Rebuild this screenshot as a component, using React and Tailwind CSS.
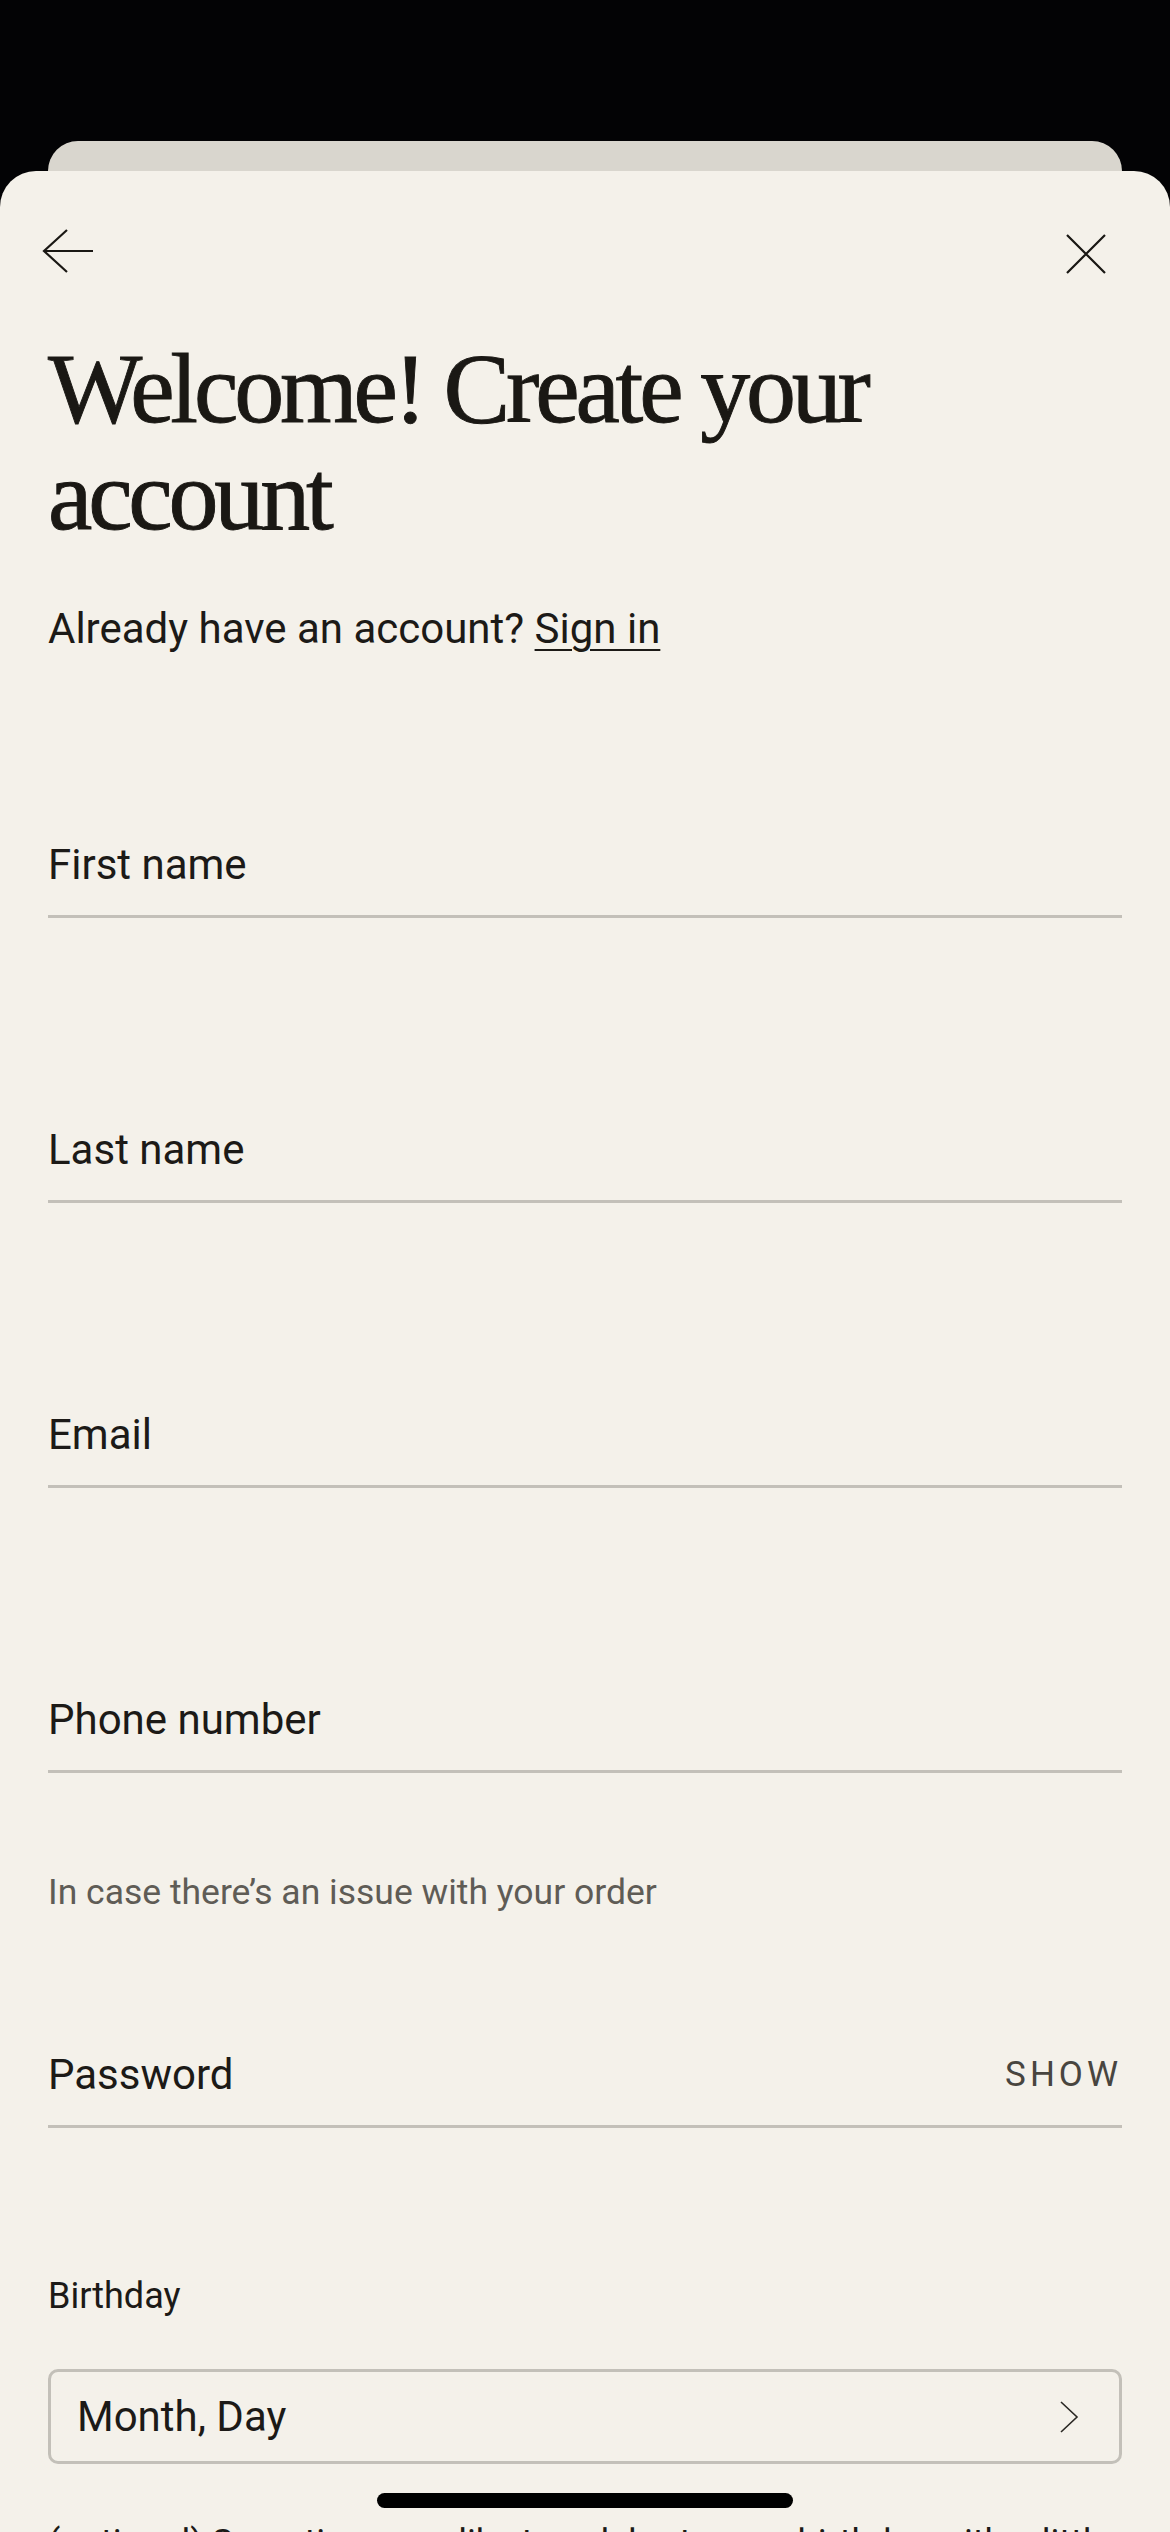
import React from "react";

const sans = "font-['Roboto',sans-serif]";

const Field = ({ label, right, className = "" }) => (
  <div className={`flex items-center justify-between border-b-[3px] border-[#c3c0b9] pb-[25px] ${className}`}>
    <span className="text-[42px] leading-[50px] text-[#1c1a17]">{label}</span>
    {right}
  </div>
);

const App = () => {
  return (
    <div className={`relative h-[2532px] overflow-hidden bg-[#030305] pt-[141px] ${sans}`}>
      {/* card peeking behind the sheet */}
      <div className="mx-12 h-[30px] rounded-t-[30px] bg-[#d9d6ce]" />

      {/* sheet */}
      <div className="min-h-[2361px] rounded-t-[36px] bg-[#f4f1ea] pt-[40px]">
        <div className="flex h-[80px] items-center justify-between pl-[42px] pr-[64px]">
          <svg width="52" height="44" viewBox="0 0 52 44" fill="none" stroke="#1a1814" strokeWidth="2.2">
            <path d="M2 22H51" />
            <path d="M25 1L2 22L25 43" />
          </svg>
          <svg className="mt-[6px]" width="40" height="40" viewBox="0 0 40 40" fill="none" stroke="#1a1814" strokeWidth="2.2">
            <path d="M1 1L39 39M39 1L1 39" />
          </svg>
        </div>

        <div className="px-12">
          <h1 className="mt-[44px] font-['Liberation_Serif',serif] text-[100px] leading-[107px] tracking-[-4.2px] text-[#1a1814] [-webkit-text-stroke:0.9px_#1a1814]">
            Welcome! Create your
            <br />
            account
          </h1>

          <p className="mt-[55px] text-[42px] leading-[50px] text-[#1c1a17]">
            Already have an account?{" "}
            <span className="underline decoration-2 underline-offset-[6px]">Sign in</span>
          </p>

          <Field label="First name" className="mt-[186px]" />
          <Field label="Last name" className="mt-[207px]" />
          <Field label="Email" className="mt-[207px]" />
          <Field label="Phone number" className="mt-[207px]" />

          <p className="mt-[98px] text-[35.5px] leading-[42px] text-[#5f5c56]">
            In case there’s an issue with your order
          </p>

          <Field
            label="Password"
            className="mt-[137px]"
            right={<span className="text-[35px] leading-[50px] tracking-[4px] text-[#48453f]">SHOW</span>}
          />

          <p className="mt-[147px] text-[36px] leading-[42px] text-[#1c1a17]">Birthday</p>

          <div className="mt-[52px] flex h-[95px] items-center justify-between rounded-[10px] border-[3px] border-[#c3c0b9] pl-[26px] pr-[40px]">
            <span className="text-[42px] leading-[50px] text-[#1c1a17]">Month, Day</span>
            <svg width="20" height="34" viewBox="0 0 20 34" fill="none" stroke="#2a2824" strokeWidth="1.6">
              <path d="M2 2L18 17L2 32" />
            </svg>
          </div>

          <p className="mt-[58px] text-[36px] leading-[42px] text-[#1c1a17]">
            (optional) Sometimes we like to celebrate your birthday with a little treat
          </p>
        </div>
      </div>

      {/* home indicator */}
      <div className="absolute bottom-[24px] left-1/2 h-[15px] w-[416px] -translate-x-1/2 rounded-full bg-black" />
    </div>
  );
};

export default App;
